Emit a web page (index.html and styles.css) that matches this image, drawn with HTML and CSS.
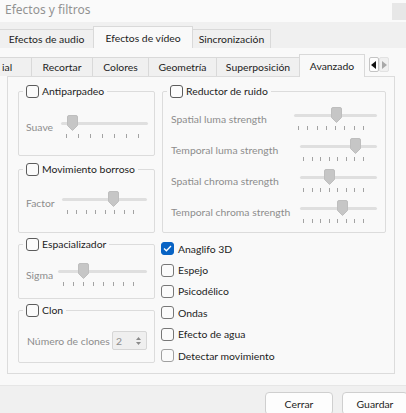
FILE: index.html
```html
<!DOCTYPE html>
<html lang="es">
<head>
<meta charset="utf-8">
<title>Efectos y filtros</title>
<link rel="stylesheet" href="styles.css">
</head>
<body>
<div class="window">
  <div class="titlebar">
    <span class="title">Efectos y filtros</span>
    <span class="winbtn"></span>
  </div>

  <div class="outer-tabs">
    <div class="otab t-audio">Efectos de audio</div>
    <div class="otab t-video active">Efectos de vídeo</div>
    <div class="otab t-sync">Sincronización</div>
  </div>

  <div class="outer-panel">
    <div class="inner-tabs">
      <div class="itab t-ess">ial</div>
      <div class="itab t-crop">Recortar</div>
      <div class="itab t-col">Colores</div>
      <div class="itab t-geo">Geometría</div>
      <div class="itab t-over">Superposición</div>
      <div class="itab t-adv active">Avanzado</div>
      <div class="arrows">
        <span class="arrow on"><svg width="6" height="8" viewBox="0 0 6 8"><path d="M5 0 V8 L0 4 Z" fill="#111"/></svg></span>
        <span class="arrow off"><svg width="6" height="8" viewBox="0 0 6 8"><path d="M1 0 V8 L6 4 Z" fill="#a8a8a8"/></svg></span>
      </div>
    </div>

    <div class="inner-panel">
      <div class="col col-left">
        <div class="group g1">
          <label class="legend"><span class="cb"></span>Antiparpadeo</label>
          <div class="row r1">
            <span class="lbl w35">Suave</span>
            <div class="slider s-a">
              <div class="track"></div>
              <div class="ticks"><i></i><i></i><i></i><i></i><i></i><i></i><i></i></div>
              <svg class="handle" style="left:6px" width="11" height="16" viewBox="0 0 11 16"><path d="M2 0.5 H9 Q10.5 0.5 10.5 2 V10.5 L5.5 15.5 L0.5 10.5 V2 Q0.5 0.5 2 0.5 Z" fill="#c6c6c6" stroke="#bebebe"/></svg>
            </div>
          </div>
        </div>

        <div class="group g2">
          <label class="legend"><span class="cb"></span>Movimiento borroso</label>
          <div class="row r2">
            <span class="lbl w36">Factor</span>
            <div class="slider s-b">
              <div class="track"></div>
              <div class="ticks"><i></i><i></i><i></i><i></i><i></i><i></i><i></i><i></i></div>
              <svg class="handle" style="left:46px" width="11" height="16" viewBox="0 0 11 16"><path d="M2 0.5 H9 Q10.5 0.5 10.5 2 V10.5 L5.5 15.5 L0.5 10.5 V2 Q0.5 0.5 2 0.5 Z" fill="#c6c6c6" stroke="#bebebe"/></svg>
            </div>
          </div>
        </div>

        <div class="group g3">
          <label class="legend"><span class="cb"></span>Espacializador</label>
          <div class="row r3">
            <span class="lbl w32">Sigma</span>
            <div class="slider s-c">
              <div class="track"></div>
              <div class="ticks"><i></i><i></i><i></i><i></i><i></i><i></i><i></i><i></i></div>
              <svg class="handle" style="left:20px" width="11" height="16" viewBox="0 0 11 16"><path d="M2 0.5 H9 Q10.5 0.5 10.5 2 V10.5 L5.5 15.5 L0.5 10.5 V2 Q0.5 0.5 2 0.5 Z" fill="#c6c6c6" stroke="#bebebe"/></svg>
            </div>
          </div>
        </div>

        <div class="group g4">
          <label class="legend"><span class="cb"></span>Clon</label>
          <div class="row r4">
            <span class="lbl w85">Número de clones</span>
            <div class="spin">
              <span class="spin-val">2</span>
              <span class="spin-btns">
                <svg width="5" height="3" viewBox="0 0 5 3"><path d="M0 3 L2.5 0 L5 3 Z" fill="#8a8a8a"/></svg>
                <svg width="5" height="3" viewBox="0 0 5 3"><path d="M0 0 L2.5 3 L5 0 Z" fill="#8a8a8a"/></svg>
              </span>
            </div>
          </div>
        </div>
      </div>

      <div class="col col-right">
        <div class="group g5">
          <label class="legend"><span class="cb"></span>Reductor de ruido</label>
          <div class="row rr first">
            <span class="lbl w123">Spatial luma strength</span>
            <div class="slider s-r1">
              <div class="track"></div>
              <div class="ticks"><i></i><i></i><i></i><i></i><i></i><i></i><i></i><i></i></div>
              <svg class="handle" style="left:37px" width="11" height="16" viewBox="0 0 11 16"><path d="M2 0.5 H9 Q10.5 0.5 10.5 2 V10.5 L5.5 15.5 L0.5 10.5 V2 Q0.5 0.5 2 0.5 Z" fill="#c6c6c6" stroke="#bebebe"/></svg>
            </div>
          </div>
          <div class="row rr">
            <span class="lbl w129">Temporal luma strength</span>
            <div class="slider s-r">
              <div class="track"></div>
              <div class="ticks"><i></i><i></i><i></i><i></i><i></i><i></i><i></i><i></i></div>
              <svg class="handle" style="left:50px" width="11" height="16" viewBox="0 0 11 16"><path d="M2 0.5 H9 Q10.5 0.5 10.5 2 V10.5 L5.5 15.5 L0.5 10.5 V2 Q0.5 0.5 2 0.5 Z" fill="#c6c6c6" stroke="#bebebe"/></svg>
            </div>
          </div>
          <div class="row rr">
            <span class="lbl w129">Spatial chroma strength</span>
            <div class="slider s-r">
              <div class="track"></div>
              <div class="ticks"><i></i><i></i><i></i><i></i><i></i><i></i><i></i><i></i></div>
              <svg class="handle" style="left:24px" width="11" height="16" viewBox="0 0 11 16"><path d="M2 0.5 H9 Q10.5 0.5 10.5 2 V10.5 L5.5 15.5 L0.5 10.5 V2 Q0.5 0.5 2 0.5 Z" fill="#c6c6c6" stroke="#bebebe"/></svg>
            </div>
          </div>
          <div class="row rr">
            <span class="lbl w129">Temporal chroma strength</span>
            <div class="slider s-r">
              <div class="track"></div>
              <div class="ticks"><i></i><i></i><i></i><i></i><i></i><i></i><i></i><i></i></div>
              <svg class="handle" style="left:37px" width="11" height="16" viewBox="0 0 11 16"><path d="M2 0.5 H9 Q10.5 0.5 10.5 2 V10.5 L5.5 15.5 L0.5 10.5 V2 Q0.5 0.5 2 0.5 Z" fill="#c6c6c6" stroke="#bebebe"/></svg>
            </div>
          </div>
        </div>

        <ul class="checklist">
          <li><span class="cb checked"><svg width="9" height="7" viewBox="0 0 9 7"><path d="M1 3.5 L3.4 5.8 L8 1" fill="none" stroke="#fff" stroke-width="1.3"/></svg></span>Anaglifo 3D</li>
          <li><span class="cb light"></span>Espejo</li>
          <li><span class="cb light"></span>Psicodélico</li>
          <li><span class="cb light"></span>Ondas</li>
          <li><span class="cb light"></span>Efecto de agua</li>
          <li><span class="cb lighter"></span>Detectar movimiento</li>
        </ul>
      </div>
    </div>
  </div>

  <div class="footer">
    <button class="btn btn-close">Cerrar</button>
    <button class="btn btn-save">Guardar</button>
  </div>
</div>
</body>
</html>
```

FILE: styles.css
```css
* { box-sizing: border-box; }
html, body { margin: 0; padding: 0; }
body {
  width: 406px;
  height: 413px;
  overflow: hidden;
  background: #f0f0f0;
  font-family: Lato, "Noto Sans", sans-serif;
  font-size: 10.4px;
  color: #1c1c1c;
}
.window { width: 406px; height: 413px; overflow: hidden; display: flex; flex-direction: column; }

/* title bar */
.titlebar {
  height: 22px;
  flex: none;
  background: #fafafa;
  display: flex;
  justify-content: space-between;
  align-items: flex-start;
  padding-left: 5px;
}
.title { color: #929292; font-family: "Noto Sans", sans-serif; font-size: 12px; line-height: 20px; }
.winbtn { width: 14px; height: 17px; margin-top: 3px; background: #e7e7e7; }

/* outer tabs */
.outer-tabs {
  height: 26px;
  flex: none;
  display: flex;
  align-items: flex-end;
  background: #f0f0f0;
}
.otab {
  height: 19px;
  border: 1px solid #d9d9d9;
  border-bottom: none;
  background: #f0f0f0;
  display: flex;
  align-items: center;
  justify-content: center;
  margin-right: -1px;
  white-space: nowrap;
}
.otab.active { height: 22px; background: #f9f9f9; position: relative; z-index: 1; }
.t-audio { width: 95px; margin-left: -1px; }
.t-video { width: 100px; }
.t-sync { width: 79px; }

/* outer panel */
.outer-panel {
  height: 337px;
  flex: none;
  background: #f9f9f9;
  padding-left: 7px;
}

.inner-tabs {
  height: 28px;
  display: flex;
  align-items: flex-end;
  margin-left: -7px;
}
.itab {
  height: 19px;
  border: 1px solid #d9d9d9;
  border-bottom: none;
  background: #f0f0f0;
  display: flex;
  align-items: center;
  justify-content: center;
  margin-right: -1px;
  white-space: nowrap;
}
.itab.active { height: 23px; margin-bottom: -1px; background: #f9f9f9; position: relative; z-index: 1; }
.t-ess { width: 33px; margin-left: -1px; justify-content: flex-start; padding-left: 2px; }
.t-crop { width: 62px; }
.t-col { width: 57px; }
.t-geo { width: 69px; }
.t-over { width: 84px; }
.t-adv { width: 66px; }

.arrows { display: flex; margin-left: 5px; margin-bottom: 4px; align-self: flex-end; }
.arrow {
  width: 10px;
  height: 15px;
  display: flex;
  align-items: center;
  justify-content: center;
}
.arrow.on { background: #fdfdfd; border: 1px solid #c4c4c4; border-radius: 2px; }
.arrow.off { background: #f0f0f0; border: 1px solid #e2e2e2; border-radius: 2px; }

/* inner panel */
.inner-panel {
  width: 388px;
  height: 298px;
  border: 1px solid #dcdcdc;
  background: #f9f9f9;
  padding: 0 8px 0 10px;
  display: grid;
  grid-template-columns: 137px 224px;
  column-gap: 7px;
  align-items: start;
}
.col { display: flex; flex-direction: column; }

.group {
  border: 1px solid #dcdcdc;
  border-radius: 2px;
  display: flex;
  flex-direction: column;
}
.legend {
  align-self: flex-start;
  display: flex;
  align-items: center;
  height: 14px;
  margin: -8px 0 0 4px;
  padding: 0 3px;
  background: #f9f9f9;
  white-space: nowrap;
}
.g1 { margin-top: 14px; height: 65px; }
.g2 { margin-top: 13px; height: 64px; }
.g3 { margin-top: 11px; height: 55px; }
.g4 { margin-top: 11px; height: 53px; }
.g5 { margin-top: 14px; height: 142px; }

.cb {
  width: 13px;
  height: 13px;
  flex: none;
  border: 1px solid #5c5c5c;
  border-radius: 3px;
  background: #fbfbfb;
  margin-right: 3px;
  display: inline-flex;
  align-items: center;
  justify-content: center;
}
.cb.light { border-color: #777; }
.cb.lighter { border-color: #a0a0a0; }
.cb.checked { background: #0863c4; border-color: #0863c4; }

.row { display: flex; align-items: center; padding-left: 7px; }
.r1 { margin-top: 17px; }
.r2 { margin-top: 15px; }
.r3 { margin-top: 12px; }
.r4 { margin-top: 14px; padding-left: 8px; }
.rr { padding-left: 8px; margin-top: 7px; }
.rr.first { margin-top: 9px; }

.lbl { color: #8d8d8d; white-space: nowrap; flex: none; }
.w35 { width: 35px; }
.w36 { width: 36px; }
.w32 { width: 32px; }
.w85 { width: 85px; }
.w123 { width: 123px; }
.w129 { width: 129px; }

/* slider */
.slider { position: relative; height: 24px; flex: none; }
.track { margin-top: 7px; height: 3px; background: #dfdfdf; border-radius: 2px; }
.ticks { margin-top: 9px; height: 4px; display: flex; justify-content: space-between; }
.ticks i { width: 1px; height: 4px; background: #a3a3a3; }
.handle { position: absolute; top: 0; }
.s-a { width: 87px; }
.s-a .ticks { padding: 0 9px 0 5px; }
.s-b { width: 85px; }
.s-b .ticks { padding: 0 13px 0 5px; }
.s-c { width: 89px; }
.s-c .ticks { padding: 0 13px 0 5px; }
.s-r1 { width: 83px; }
.s-r1 .ticks { padding: 0 13px 0 4px; }
.s-r { width: 77px; }
.s-r .ticks { padding: 0 13px 0 3px; }

/* spin box */
.spin {
  width: 35px;
  height: 19px;
  border: 1px solid #d6d6d6;
  border-radius: 2px;
  background: #efefef;
  display: flex;
  align-items: center;
  justify-content: space-between;
  padding: 0 5px 0 3px;
}
.spin-val { color: #8d8d8d; }
.spin-btns { display: flex; flex-direction: column; gap: 2px; }
.spin-btns svg { display: block; }

/* checklist */
.checklist { list-style: none; margin: 5px 0 0 -1px; padding: 0; }
.checklist li { height: 21.4px; display: flex; align-items: center; white-space: nowrap; }
.checklist .cb { margin-right: 4px; }

/* footer */
.footer {
  flex: 1;
  background: #f0f0f0;
  border-top: 1px solid #e6e6e6;
  display: flex;
  justify-content: flex-end;
  align-items: flex-start;
  padding-top: 6px;
  gap: 9px;
  margin-right: -2px;
}
.btn {
  height: 23px;
  border: 1px solid #cfcfcf;
  border-radius: 4px;
  background: #fdfdfd;
  font: inherit;
  color: #1c1c1c;
  padding: 0;
}
.btn-close { width: 68px; }
.btn-save { width: 66px; }
```
